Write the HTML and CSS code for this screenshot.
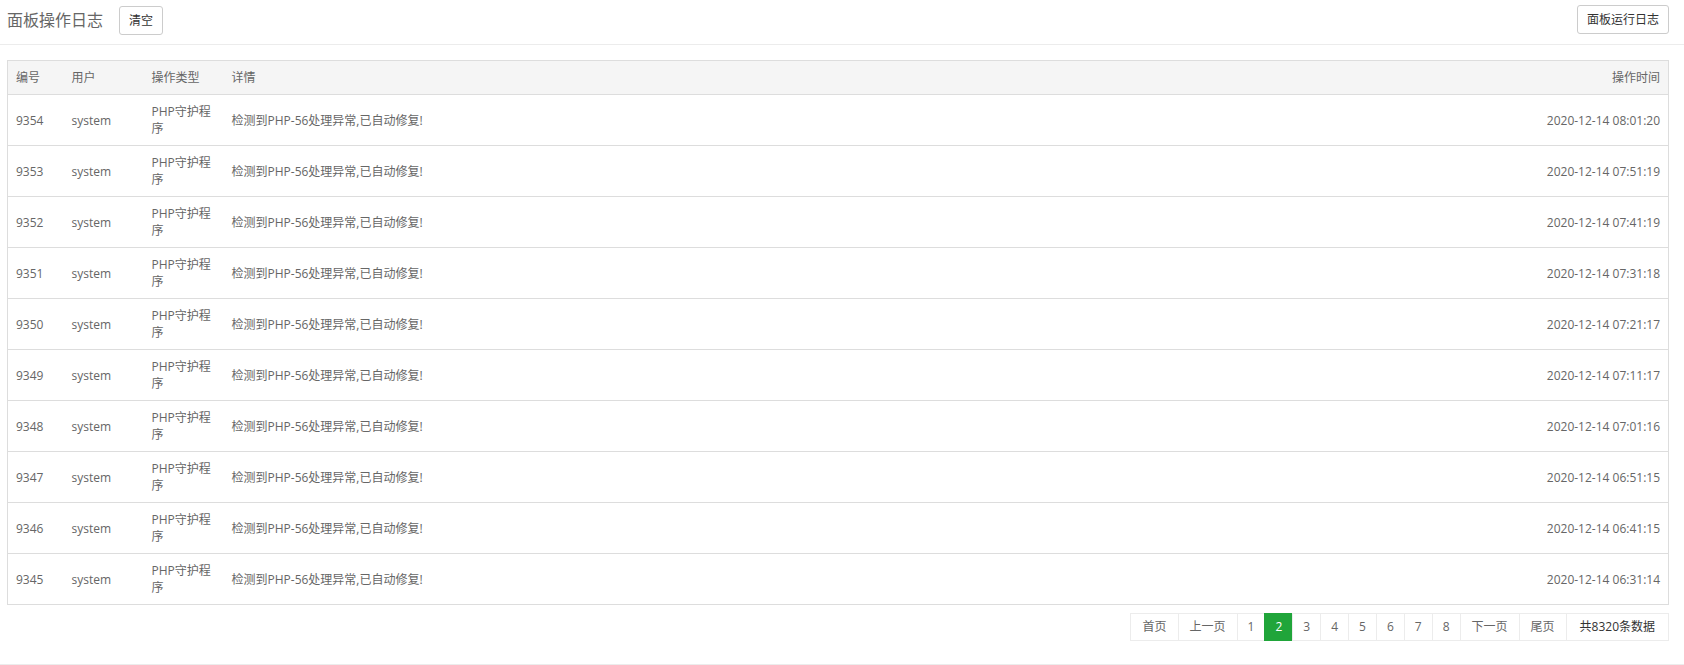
FILE: index.html
```html
<!DOCTYPE html>
<html>
<head>
<meta charset="utf-8">
<link rel="stylesheet" href="styles.css">
</head>
<body>
<div class="page">
  <div class="topbar">
    <div class="topbar-left">
      <span class="title">面板操作日志</span>
      <button class="btn">清空</button>
    </div>
    <button class="btn btn-run">面板运行日志</button>
  </div>
  <div class="content">
    <table class="log-table">
      <thead>
        <tr>
          <th class="c-id">编号</th>
          <th class="c-user">用户</th>
          <th class="c-type">操作类型</th>
          <th class="c-detail">详情</th>
          <th class="c-time">操作时间</th>
        </tr>
      </thead>
      <tbody>
        <tr><td>9354</td><td>system</td><td>PHP守护程序</td><td>检测到PHP-56处理异常,已自动修复!</td><td class="c-time">2020-12-14 08:01:20</td></tr>
        <tr><td>9353</td><td>system</td><td>PHP守护程序</td><td>检测到PHP-56处理异常,已自动修复!</td><td class="c-time">2020-12-14 07:51:19</td></tr>
        <tr><td>9352</td><td>system</td><td>PHP守护程序</td><td>检测到PHP-56处理异常,已自动修复!</td><td class="c-time">2020-12-14 07:41:19</td></tr>
        <tr><td>9351</td><td>system</td><td>PHP守护程序</td><td>检测到PHP-56处理异常,已自动修复!</td><td class="c-time">2020-12-14 07:31:18</td></tr>
        <tr><td>9350</td><td>system</td><td>PHP守护程序</td><td>检测到PHP-56处理异常,已自动修复!</td><td class="c-time">2020-12-14 07:21:17</td></tr>
        <tr><td>9349</td><td>system</td><td>PHP守护程序</td><td>检测到PHP-56处理异常,已自动修复!</td><td class="c-time">2020-12-14 07:11:17</td></tr>
        <tr><td>9348</td><td>system</td><td>PHP守护程序</td><td>检测到PHP-56处理异常,已自动修复!</td><td class="c-time">2020-12-14 07:01:16</td></tr>
        <tr><td>9347</td><td>system</td><td>PHP守护程序</td><td>检测到PHP-56处理异常,已自动修复!</td><td class="c-time">2020-12-14 06:51:15</td></tr>
        <tr><td>9346</td><td>system</td><td>PHP守护程序</td><td>检测到PHP-56处理异常,已自动修复!</td><td class="c-time">2020-12-14 06:41:15</td></tr>
        <tr><td>9345</td><td>system</td><td>PHP守护程序</td><td>检测到PHP-56处理异常,已自动修复!</td><td class="c-time">2020-12-14 06:31:14</td></tr>
      </tbody>
    </table>
    <div class="pager">
      <a class="pg pg-text">首页</a>
      <a class="pg pg-text">上一页</a>
      <a class="pg">1</a>
      <span class="pg active">2</span>
      <a class="pg">3</a>
      <a class="pg">4</a>
      <a class="pg">5</a>
      <a class="pg">6</a>
      <a class="pg">7</a>
      <a class="pg">8</a>
      <a class="pg pg-text">下一页</a>
      <a class="pg pg-text">尾页</a>
      <span class="pg pg-text pg-total">共8320条数据</span>
    </div>
  </div>
  <div class="footer-line"></div>
</div>
</body>
</html>
```

FILE: styles.css
```css
* { box-sizing: border-box; }
html, body {
  margin: 0;
  padding: 0;
  background: #fff;
}
body {
  font-family: "Open Sans", "Noto Sans CJK SC", sans-serif;
  font-size: 12px;
  color: #666;
  line-height: 17px;
}
.page {
  width: 1684px;
  height: 665px;
}
.topbar {
  height: 45px;
  border-bottom: 1px solid #ececec;
  display: flex;
  justify-content: space-between;
  align-items: flex-start;
  padding: 0 15px 0 7px;
}
.topbar-left {
  display: flex;
  align-items: flex-start;
}
.title {
  font-size: 16px;
  color: #666;
  line-height: 20px;
  margin-top: 10px;
  margin-right: 16px;
}
.btn {
  font-family: "Open Sans", "Noto Sans CJK SC", sans-serif;
  font-size: 12px;
  color: #333;
  background: #fff;
  border: 1px solid #ccc;
  border-radius: 3px;
  height: 29px;
  padding: 0 9px;
  margin-top: 6px;
  line-height: 27px;
}
.btn-run {
  margin-top: 5px;
  padding: 0 9px;
}
.content {
  padding: 15px 15px 0 7px;
  height: 619px;
}
.log-table {
  width: 100%;
  border-collapse: collapse;
  border: 1px solid #ddd;
}
.log-table th,
.log-table td {
  padding: 8px;
  text-align: left;
  font-weight: normal;
  vertical-align: middle;
  line-height: 17px;
}
.log-table th {
  background: #f5f5f5;
  color: #666;
  border-bottom: 1px solid #ddd;
}
.log-table td {
  border-top: 1px solid #ddd;
  color: #666;
}
.c-id { width: 56px; }
.c-user { width: 80px; }
.c-type { width: 80px; }
.log-table .c-time { text-align: right; }
.pager {
  display: flex;
  justify-content: flex-end;
  margin-top: 8px;
}
.pg {
  display: block;
  height: 28px;
  line-height: 26px;
  min-width: 28px;
  padding: 0 10px;
  text-align: center;
  border: 1px solid #ececec;
  margin-left: -1px;
  color: #666;
  font-size: 12px;
  background: #fff;
}
.pg-text { padding: 0 11px; }
.pg-text.pg-total { padding: 0 13px; color: #333; }
.pg.active {
  background: #20a53a;
  border-color: #20a53a;
  color: #fff;
}
.footer-line {
  border-top: 1px solid #ececec;
}
```
